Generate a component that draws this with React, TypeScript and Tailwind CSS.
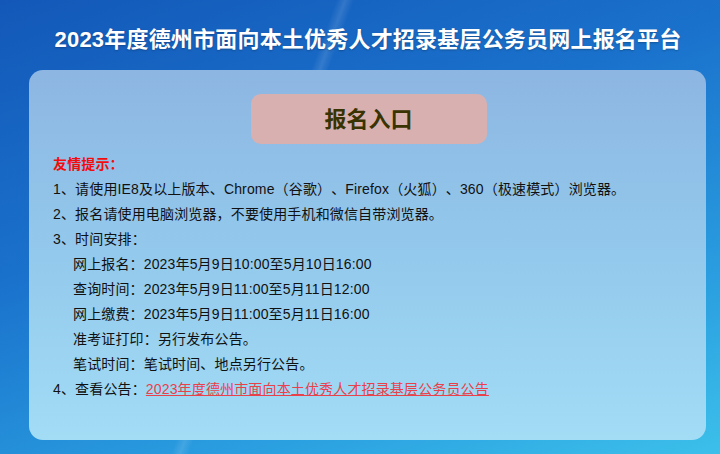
export default function App() {
  const font = { fontFamily: '"Liberation Sans", Arial, "Noto Sans CJK SC", sans-serif' }

  return (
    <div
      className="w-[720px] h-[454px] overflow-hidden relative bg-[linear-gradient(160deg,#1358b8_0%,#1a72cc_40%,#2a9ee0_75%,#3cc0ea_100%)]"
      style={font}
    >
      {/* faint light streak */}
      <div className="absolute inset-0 bg-[linear-gradient(110deg,transparent_38%,rgba(255,255,255,0.12)_39%,transparent_40%)] pointer-events-none" />

      <div className="relative flex flex-col items-center">
        <h1 className="mt-[26px] h-[28px] pl-[16px] text-[22px] leading-[28px] font-bold text-white tracking-[0.2px] [text-shadow:0_1px_2px_rgba(0,0,0,0.25)]">
          2023年度德州市面向本土优秀人才招录基层公务员网上报名平台
        </h1>

        <div className="mt-[16px] ml-[15px] w-[677px] h-[370px] rounded-[14px] bg-[linear-gradient(180deg,#8db6e2_0%,#93c9ec_50%,#a2dcf5_100%)] flex flex-col">
          <div className="flex justify-center pt-[24px] pl-[2px]">
            <div className="w-[236px] h-[50px] rounded-[10px] bg-[#d9b0b0] flex items-center justify-center text-[22px] font-bold text-[#383300]">
              报名入口
            </div>
          </div>

          <div className="pl-[24px] pt-[8px] text-[14px] leading-[25px] tracking-[0.15px] text-[#111] [text-spacing-trim:space-all]">
            <p className="text-[#f20c0c] font-bold">友情提示：</p>
            <p>1、请使用IE8及以上版本、Chrome（谷歌）、Firefox（火狐）、360（极速模式）浏览器。</p>
            <p>2、报名请使用电脑浏览器，不要使用手机和微信自带浏览器。</p>
            <p>3、时间安排：</p>
            <div className="pl-[20px]">
              <p>网上报名：2023年5月9日10:00至5月10日16:00</p>
              <p>查询时间：2023年5月9日11:00至5月11日12:00</p>
              <p>网上缴费：2023年5月9日11:00至5月11日16:00</p>
              <p>准考证打印：另行发布公告。</p>
              <p>笔试时间：笔试时间、地点另行公告。</p>
            </div>
            <p>
              4、查看公告：
              <a href="#" className="text-[#e8414a] underline">
                2023年度德州市面向本土优秀人才招录基层公务员公告
              </a>
            </p>
          </div>
        </div>
      </div>
    </div>
  )
}
